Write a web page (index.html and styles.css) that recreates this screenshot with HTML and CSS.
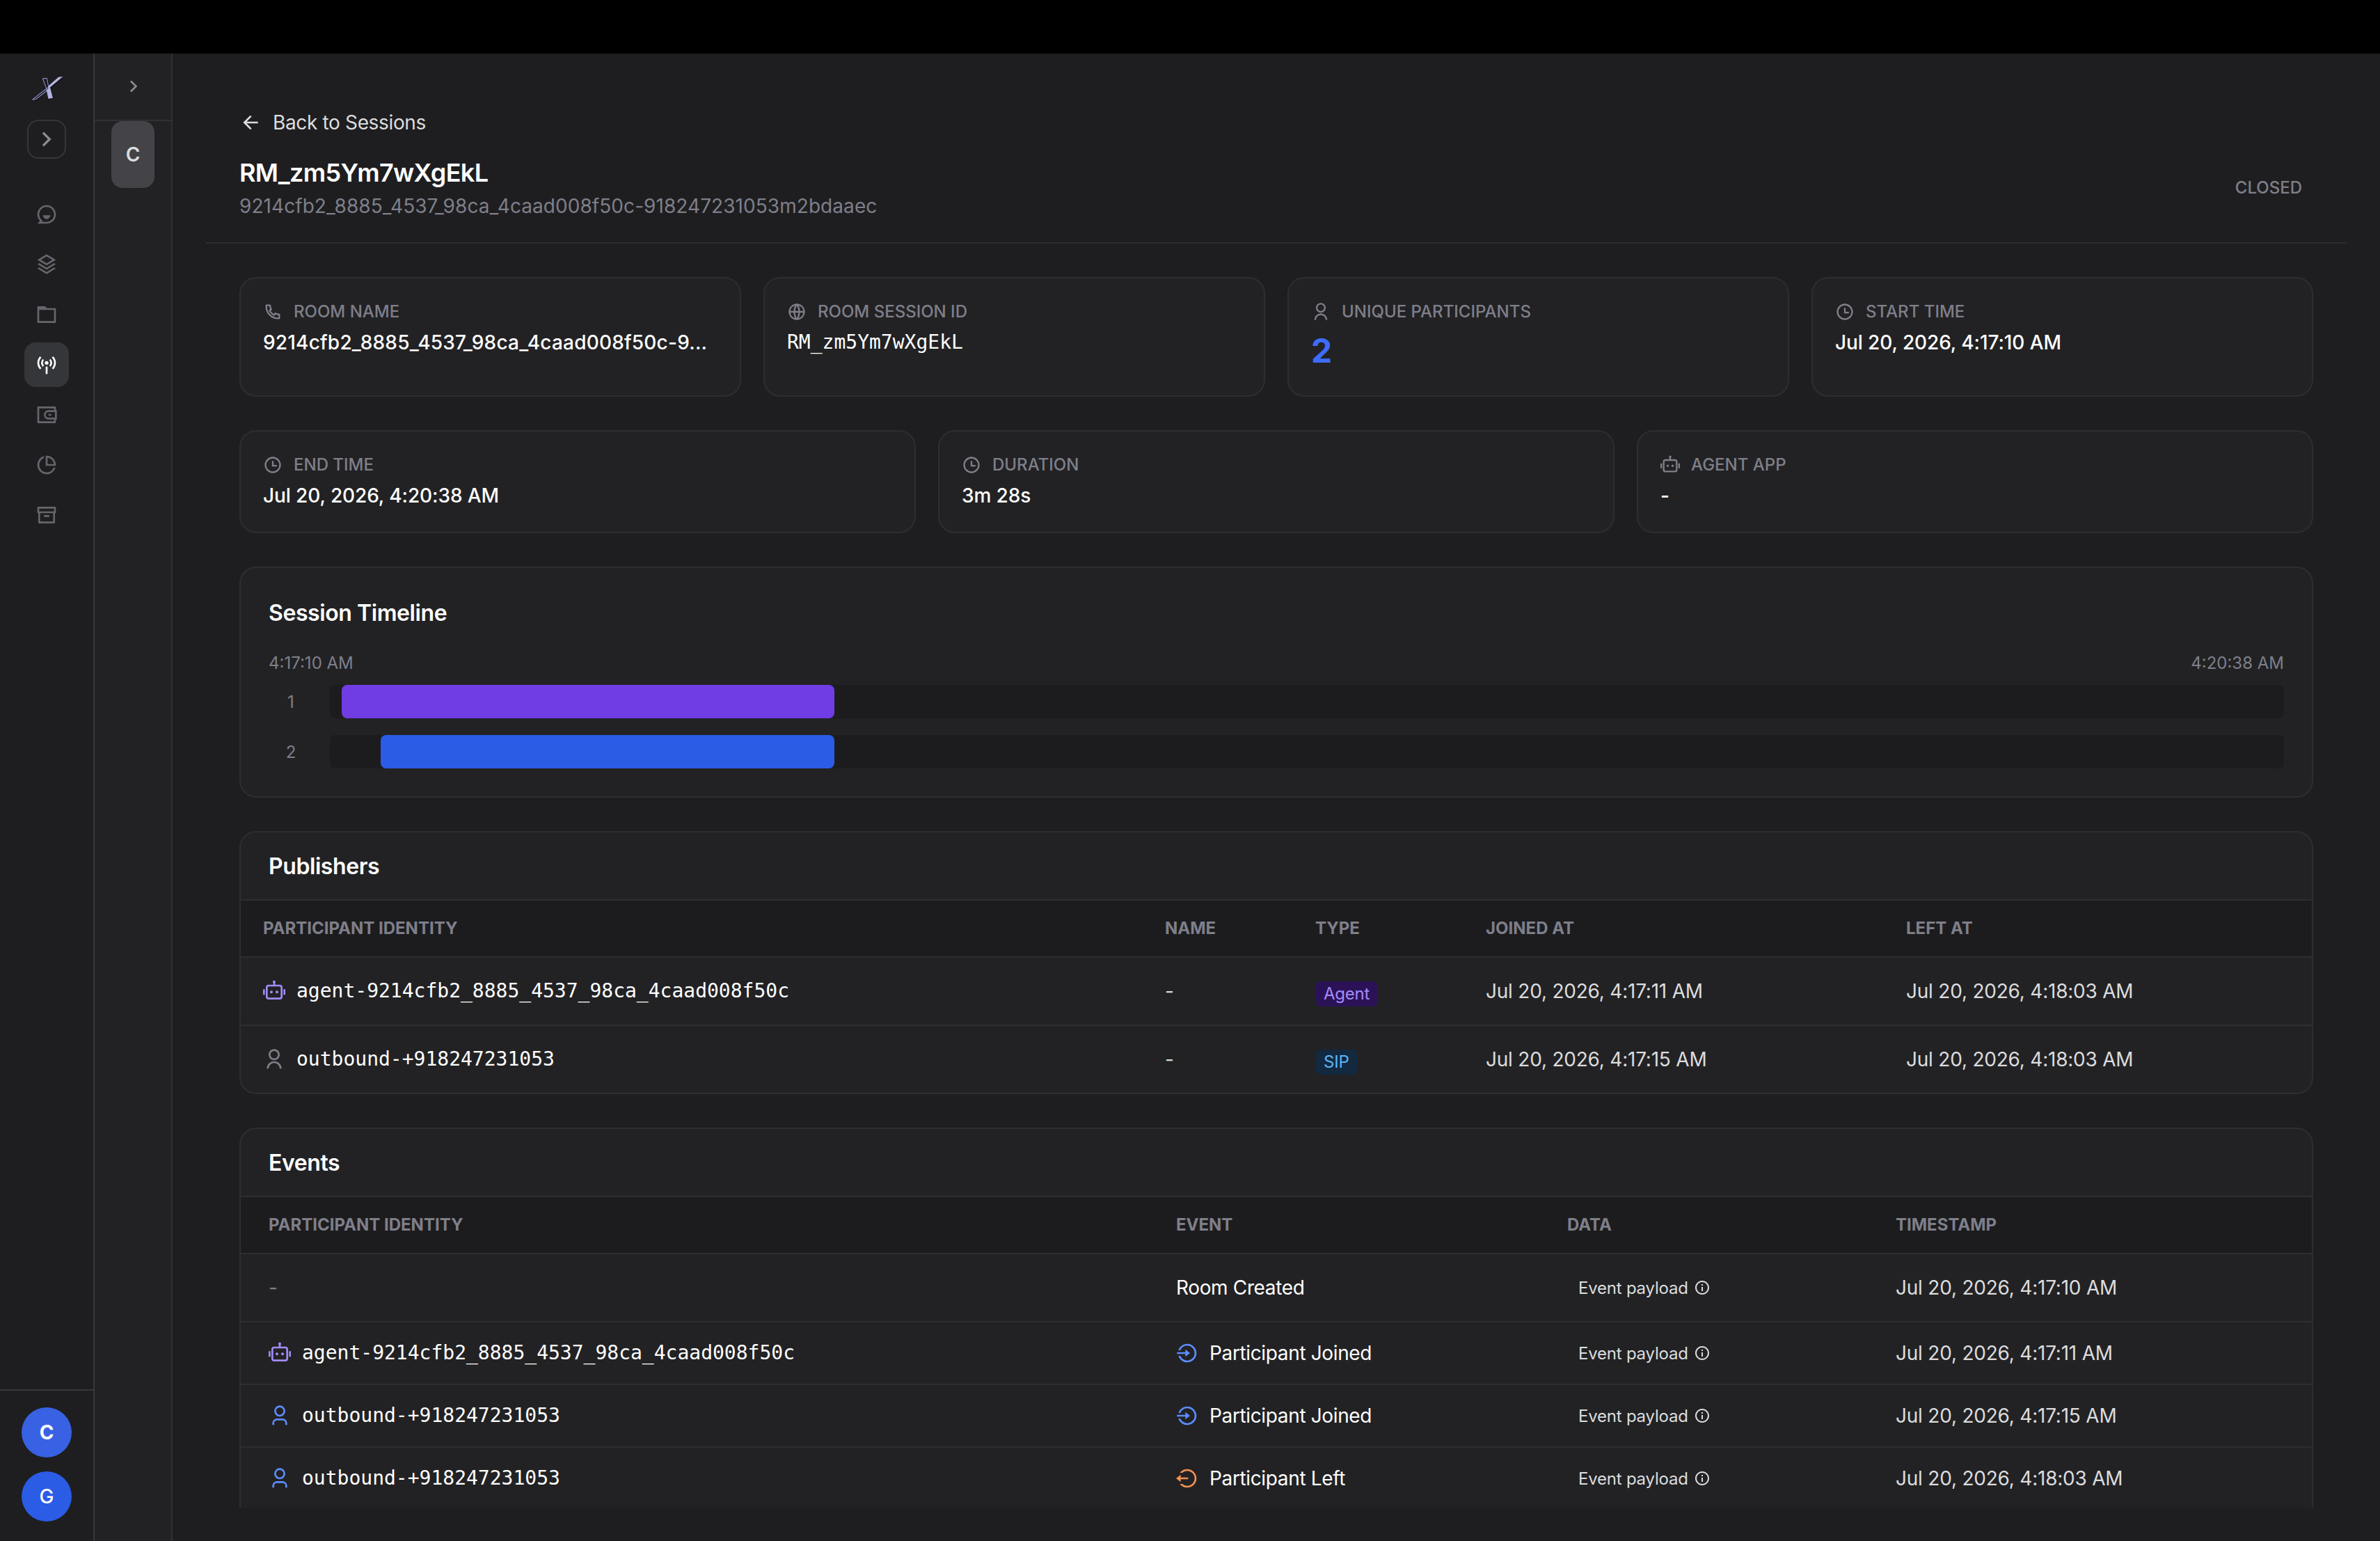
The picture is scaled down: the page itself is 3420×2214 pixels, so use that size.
FILE: index.html
```html
<!DOCTYPE html>
<html lang="en">
<head>
    <meta charset="UTF-8">
    <meta name="viewport" content="width=device-width, initial-scale=1.0">
    <title>Session Details</title>
    <link rel="stylesheet" href="styles.css">
</head>
<body>
    <svg class="sprite" aria-hidden="true">
        <symbol id="chevron" viewBox="0 0 24 24"><path d="M13.172 12l-4.95-4.95 1.414-1.414L16 12l-6.364 6.364-1.414-1.414z"/></symbol>
        <symbol id="chat" viewBox="0 0 24 24"><path d="M2 12C2 6.477 6.477 2 12 2s10 4.477 10 10-4.477 10-10 10H2l2.929-2.929A9.969 9.969 0 0 1 2 12zm4.828 8H12a8 8 0 1 0-8-8c0 2.152.851 4.165 2.343 5.657l1.414 1.414-.929.929zM8 13h8a4 4 0 1 1-8 0z"/></symbol>
        <symbol id="stack" viewBox="0 0 24 24"><path d="M20.083 15.2l1.202.721a.5.5 0 0 1 0 .858l-8.77 5.262a1 1 0 0 1-1.03 0l-8.77-5.262a.5.5 0 0 1 0-.858l1.202-.721L12 20.05l8.083-4.85zm0-4.7l1.202.721a.5.5 0 0 1 0 .858L12 17.65l-9.285-5.571a.5.5 0 0 1 0-.858l1.202-.721L12 15.35l8.083-4.85zm-7.569-9.191l8.771 5.262a.5.5 0 0 1 0 .858L12 13 2.715 7.429a.5.5 0 0 1 0-.858l8.77-5.262a1 1 0 0 1 1.03 0zM12 3.332L5.887 7 12 10.668 18.113 7 12 3.332z"/></symbol>
        <symbol id="folder" viewBox="0 0 24 24"><path d="M12.414 5H21a1 1 0 0 1 1 1v14a1 1 0 0 1-1 1H3a1 1 0 0 1-1-1V4a1 1 0 0 1 1-1h7.414l2 2zM4 7v12h16V7H4z"/></symbol>
        <symbol id="broadcast" viewBox="0 0 24 24"><circle cx="12" cy="10" r="2"/><path d="M11 14h2v8h-2z"/><path d="M5.64 3.64a9 9 0 0 0 0 12.72M18.36 3.64a9 9 0 0 1 0 12.72M8.46 6.46a5 5 0 0 0 0 7.08M15.54 6.46a5 5 0 0 1 0 7.08" fill="none" stroke="currentColor" stroke-width="2"/></symbol>
        <symbol id="wallet" viewBox="0 0 24 24"><path d="M22 7h1v10h-1v3a1 1 0 0 1-1 1H3a1 1 0 0 1-1-1V4a1 1 0 0 1 1-1h18a1 1 0 0 1 1 1v3zm-2 10h-6a5 5 0 0 1 0-10h6V5H4v14h16v-2zm1-2V9h-7a3 3 0 0 0 0 6h7zm-7-4h3v2h-3v-2z"/></symbol>
        <symbol id="pie" viewBox="0 0 24 24"><path d="M9 2.458v2.124A8.003 8.003 0 0 0 12 20a8.003 8.003 0 0 0 7.418-5h2.124c-1.274 4.057-5.064 7-9.542 7-5.523 0-10-4.477-10-10 0-4.478 2.943-8.268 7-9.542zM12 2c5.523 0 10 4.477 10 10 0 .338-.017.671-.05 1H11V2.05c.329-.033.663-.05 1-.05zm1 2.062V11h6.938A8.004 8.004 0 0 0 13 4.062z"/></symbol>
        <symbol id="archive" viewBox="0 0 24 24"><path d="M3 10H2V4.003C2 3.449 2.455 3 2.992 3h18.016A.99.99 0 0 1 22 4.003V10h-1v10.001a.996.996 0 0 1-.993.999H3.993A.996.996 0 0 1 3 20.001V10zm16 0H5v9h14v-9zM4 5v3h16V5H4zm5 7h6v2H9v-2z"/></symbol>
        <symbol id="arrow-left" viewBox="0 0 24 24"><path d="M7.828 11H20v2H7.828l5.364 5.364-1.414 1.414L4 12l7.778-7.778 1.414 1.414z"/></symbol>
        <symbol id="phone" viewBox="0 0 24 24"><path d="M9.366 10.682a10.556 10.556 0 0 0 3.952 3.952l.884-1.238a1 1 0 0 1 1.294-.296 11.422 11.422 0 0 0 4.583 1.364 1 1 0 0 1 .921.997v4.462a1 1 0 0 1-.898.995c-.53.055-1.064.082-1.602.082C9.94 21 3 14.06 3 5.5c0-.538.027-1.072.082-1.602A1 1 0 0 1 4.077 3h4.462a1 1 0 0 1 .997.921A11.422 11.422 0 0 0 10.9 8.504a1 1 0 0 1-.296 1.294l-1.238.884zm-2.522-.657l1.9-1.357A13.41 13.41 0 0 1 7.647 5H5.01c-.006.166-.009.333-.009.5C5 12.956 11.044 19 18.5 19c.167 0 .334-.003.5-.01v-2.637a13.41 13.41 0 0 1-3.668-1.097l-1.357 1.9a12.442 12.442 0 0 1-1.588-.75l-.058-.033a12.556 12.556 0 0 1-4.702-4.702l-.033-.058a12.442 12.442 0 0 1-.75-1.588z"/></symbol>
        <symbol id="globe" viewBox="0 0 24 24"><path d="M12 22C6.477 22 2 17.523 2 12S6.477 2 12 2s10 4.477 10 10-4.477 10-10 10zm-2.29-2.333A17.9 17.9 0 0 1 8.027 13H4.062a8.008 8.008 0 0 0 5.648 6.667zM10.03 13c.151 2.439.848 4.73 1.97 6.752A15.905 15.905 0 0 0 13.97 13h-3.94zm9.908 0h-3.965a17.9 17.9 0 0 1-1.683 6.667A8.008 8.008 0 0 0 19.938 13zM4.062 11h3.965A17.9 17.9 0 0 1 9.71 4.333 8.008 8.008 0 0 0 4.062 11zm5.969 0h3.938A15.905 15.905 0 0 0 12 4.248 15.905 15.905 0 0 0 10.03 11zm4.259-6.667A17.9 17.9 0 0 1 15.973 11h3.965a8.008 8.008 0 0 0-5.648-6.667z"/></symbol>
        <symbol id="user" viewBox="0 0 24 24"><path d="M4 22a8 8 0 1 1 16 0h-2a6 6 0 1 0-12 0H4zm8-9c-3.315 0-6-2.685-6-6s2.685-6 6-6 6 2.685 6 6-2.685 6-6 6zm0-2c2.21 0 4-1.79 4-4s-1.79-4-4-4-4 1.79-4 4 1.79 4 4 4z"/></symbol>
        <symbol id="user-flat" viewBox="0 0 24 24"><path d="M20 22h-2v-2a3 3 0 0 0-3-3H9a3 3 0 0 0-3 3v2H4v-2a5 5 0 0 1 5-5h6a5 5 0 0 1 5 5v2zm-8-9a6 6 0 1 1 0-12 6 6 0 0 1 0 12zm0-2a4 4 0 1 0 0-8 4 4 0 0 0 0 8z"/></symbol>
        <symbol id="clock" viewBox="0 0 24 24"><path d="M12 22C6.477 22 2 17.523 2 12S6.477 2 12 2s10 4.477 10 10-4.477 10-10 10zm0-2a8 8 0 1 0 0-16 8 8 0 0 0 0 16zm1-8h4v2h-6V7h2v5z"/></symbol>
        <symbol id="robot" viewBox="0 0 24 24"><path d="M13.5 2c0 .444-.193.843-.5 1.118V5h5a3 3 0 0 1 3 3v10a3 3 0 0 1-3 3H6a3 3 0 0 1-3-3V8a3 3 0 0 1 3-3h5V3.118A1.5 1.5 0 1 1 13.5 2zM6 7a1 1 0 0 0-1 1v10a1 1 0 0 0 1 1h12a1 1 0 0 0 1-1V8a1 1 0 0 0-1-1H6zm-4 3H0v6h2v-6zm20 0h2v6h-2v-6zM9 14.5a1.5 1.5 0 1 0 0-3 1.5 1.5 0 0 0 0 3zm6 0a1.5 1.5 0 1 0 0-3 1.5 1.5 0 0 0 0 3z"/></symbol>
        <symbol id="login" viewBox="0 0 24 24"><path d="M10 11V8l5 4-5 4v-3H1v-2h9zm-7.542 4h2.124A8.003 8.003 0 0 0 20 12 8 8 0 0 0 4.582 9H2.458C3.732 4.943 7.522 2 12 2c5.523 0 10 4.477 10 10s-4.477 10-10 10c-4.478 0-8.268-2.943-9.542-7z"/></symbol>
        <symbol id="logout" viewBox="0 0 24 24"><path d="M5 11h8v2H5v3l-5-4 5-4v3zm-1 7h2.708a8 8 0 1 0 0-12H4A9.985 9.985 0 0 1 12 2c5.523 0 10 4.477 10 10s-4.477 10-10 10a9.985 9.985 0 0 1-8-4z"/></symbol>
        <symbol id="info" viewBox="0 0 24 24"><path d="M12 22C6.477 22 2 17.523 2 12S6.477 2 12 2s10 4.477 10 10-4.477 10-10 10zm0-2a8 8 0 1 0 0-16 8 8 0 0 0 0 16zM11 7h2v2h-2V7zm0 4h2v6h-2v-6z"/></symbol>
    </svg>

    <div class="topbar"></div>
    <div class="app">
        <nav class="sidebar">
            <svg class="logo" viewBox="0 0 46 34">
                <path class="logo-shadow" d="M17 4l7-1 3 12L40 2l6-1-18 16 4 14-7 2-3-12L9 34l-8 0 19-15z"/>
                <path class="logo-dark" d="M16.7 3l5.500-.6 2.800 12.600-3.200 2.500z"/>
                <path class="logo-dark" d="M1.500 33.200l5.500-.9L22.500 20l-1-2.500z"/>
                <path class="logo-light" d="M23.500 18.500L25 13 39 .8l6.500-.8z"/>
                <path class="logo-light" d="M21.700 19.500l5.300-4 4 15.200-6.500 1.300z"/>
            </svg>
            <button class="expand"><svg class="icon-40"><use href="#chevron"/></svg></button>
            <div class="menu">
                <a class="menu-item"><svg class="icon-32"><use href="#chat"/></svg></a>
                <a class="menu-item"><svg class="icon-32"><use href="#stack"/></svg></a>
                <a class="menu-item"><svg class="icon-32"><use href="#folder"/></svg></a>
                <a class="menu-item active"><svg class="icon-32"><use href="#broadcast"/></svg></a>
                <a class="menu-item"><svg class="icon-32"><use href="#wallet"/></svg></a>
                <a class="menu-item"><svg class="icon-32"><use href="#pie"/></svg></a>
                <a class="menu-item"><svg class="icon-32"><use href="#archive"/></svg></a>
            </div>
            <div class="accounts">
                <div class="avatar avatar-org">C</div>
                <div class="avatar">G</div>
            </div>
        </nav>

        <aside class="panel">
            <div class="panel-head"><svg class="icon-32"><use href="#chevron"/></svg></div>
            <div class="workspace">C</div>
        </aside>

        <main class="main">
            <header class="header">
                <div>
                    <a class="back"><svg class="icon-32"><use href="#arrow-left"/></svg>Back to Sessions</a>
                    <h1>RM_zm5Ym7wXgEkL</h1>
                    <p class="subtitle">9214cfb2_8885_4537_98ca_4caad008f50c-918247231053m2bdaaec</p>
                </div>
                <span class="status">CLOSED</span>
            </header>

            <div class="content">
                <div class="cards cards-4">
                    <div class="card">
                        <div class="label"><svg class="icon-28"><use href="#phone"/></svg>ROOM NAME</div>
                        <div class="value room">9214cfb2_8885_4537_98ca_4caad008f50c-9...</div>
                    </div>
                    <div class="card">
                        <div class="label"><svg class="icon-28"><use href="#globe"/></svg>ROOM SESSION ID</div>
                        <div class="value mono">RM_zm5Ym7wXgEkL</div>
                    </div>
                    <div class="card">
                        <div class="label"><svg class="icon-28"><use href="#user"/></svg>UNIQUE PARTICIPANTS</div>
                        <div class="value big">2</div>
                    </div>
                    <div class="card">
                        <div class="label"><svg class="icon-28"><use href="#clock"/></svg>START TIME</div>
                        <div class="value">Jul 20, 2026, 4:17:10 AM</div>
                    </div>
                </div>

                <div class="cards cards-3">
                    <div class="card">
                        <div class="label"><svg class="icon-28"><use href="#clock"/></svg>END TIME</div>
                        <div class="value">Jul 20, 2026, 4:20:38 AM</div>
                    </div>
                    <div class="card">
                        <div class="label"><svg class="icon-28"><use href="#clock"/></svg>DURATION</div>
                        <div class="value">3m 28s</div>
                    </div>
                    <div class="card">
                        <div class="label"><svg class="icon-28"><use href="#robot"/></svg>AGENT APP</div>
                        <div class="value">-</div>
                    </div>
                </div>

                <section class="box timeline">
                    <h2>Session Timeline</h2>
                    <div class="times"><span>4:17:10 AM</span><span>4:20:38 AM</span></div>
                    <div class="track-row">
                        <span class="track-label">1</span>
                        <div class="track"><div class="bar purple" style="margin-left: 0.6%; width: 25.23%"></div></div>
                    </div>
                    <div class="track-row">
                        <span class="track-label">2</span>
                        <div class="track"><div class="bar blue" style="margin-left: 2.6%; width: 23.23%"></div></div>
                    </div>
                </section>

                <section class="box publishers">
                    <h2 class="box-title">Publishers</h2>
                    <div class="row row-head">
                        <span>PARTICIPANT IDENTITY</span><span>NAME</span><span>TYPE</span><span>JOINED AT</span><span>LEFT AT</span>
                    </div>
                    <div class="row">
                        <span class="identity"><svg class="icon-32 c-purple"><use href="#robot"/></svg>agent-9214cfb2_8885_4537_98ca_4caad008f50c</span>
                        <span>-</span>
                        <span><b class="tag tag-agent">Agent</b></span>
                        <span>Jul 20, 2026, 4:17:11 AM</span>
                        <span>Jul 20, 2026, 4:18:03 AM</span>
                    </div>
                    <div class="row">
                        <span class="identity"><svg class="icon-32 c-gray"><use href="#user"/></svg>outbound-+918247231053</span>
                        <span>-</span>
                        <span><b class="tag tag-sip">SIP</b></span>
                        <span>Jul 20, 2026, 4:17:15 AM</span>
                        <span>Jul 20, 2026, 4:18:03 AM</span>
                    </div>
                </section>

                <section class="box events">
                    <h2 class="box-title">Events</h2>
                    <div class="row row-head">
                        <span>PARTICIPANT IDENTITY</span><span>EVENT</span><span>DATA</span><span>TIMESTAMP</span>
                    </div>
                    <div class="row row-tall">
                        <span class="c-gray">-</span>
                        <span class="event">Room Created</span>
                        <span class="payload">Event payload<svg class="icon-24"><use href="#info"/></svg></span>
                        <span>Jul 20, 2026, 4:17:10 AM</span>
                    </div>
                    <div class="row">
                        <span class="identity"><svg class="icon-32 c-purple"><use href="#robot"/></svg>agent-9214cfb2_8885_4537_98ca_4caad008f50c</span>
                        <span class="event"><svg class="icon-32 c-blue"><use href="#login"/></svg>Participant Joined</span>
                        <span class="payload">Event payload<svg class="icon-24"><use href="#info"/></svg></span>
                        <span>Jul 20, 2026, 4:17:11 AM</span>
                    </div>
                    <div class="row">
                        <span class="identity"><svg class="icon-32 c-blue"><use href="#user-flat"/></svg>outbound-+918247231053</span>
                        <span class="event"><svg class="icon-32 c-blue"><use href="#login"/></svg>Participant Joined</span>
                        <span class="payload">Event payload<svg class="icon-24"><use href="#info"/></svg></span>
                        <span>Jul 20, 2026, 4:17:15 AM</span>
                    </div>
                    <div class="row">
                        <span class="identity"><svg class="icon-32 c-blue"><use href="#user-flat"/></svg>outbound-+918247231053</span>
                        <span class="event"><svg class="icon-32 c-orange"><use href="#logout"/></svg>Participant Left</span>
                        <span class="payload">Event payload<svg class="icon-24"><use href="#info"/></svg></span>
                        <span>Jul 20, 2026, 4:18:03 AM</span>
                    </div>
                </section>
            </div>
        </main>
    </div>
</body>
</html>
```
FILE: styles.css
```css
* {
    box-sizing: border-box;
    margin: 0;
    padding: 0;
}
body {
    display: flex;
    flex-direction: column;
    height: 100vh;
    overflow: hidden;
    background: #1e1e20;
    color: #dcdcde;
    font-family: Inter, sans-serif;
    font-size: 28px;
    line-height: 40px;
}
svg {
    display: block;
    flex-shrink: 0;
    fill: currentColor;
}
.sprite {
    display: none;
}
.icon-24 { width: 24px; height: 24px; }
.icon-28 { width: 28px; height: 28px; }
.icon-32 { width: 32px; height: 32px; }
.icon-40 { width: 40px; height: 40px; }
.c-purple { color: #a28bfa; }
.c-blue { color: #5c8cff; }
.c-orange { color: #f0914f; }
.c-gray { color: #7f7f8a; }

.topbar {
    height: 77px;
    flex-shrink: 0;
    background: #000;
}
.app {
    display: flex;
    flex: 1;
    min-height: 0;
}

/* left sidebar */
.sidebar {
    display: flex;
    flex-direction: column;
    align-items: center;
    width: 136px;
    padding-top: 32px;
    border-right: 2px solid #38383b;
}
.logo {
    width: 46px;
    height: 34px;
    margin: 1px 0 28px 2px;
}
.logo-shadow { fill: #0c0c14; }
.logo-dark { fill: #14141c; stroke: #8686b4; stroke-width: 1.3; }
.logo-light { fill: #b3b3dc; }
.expand {
    display: flex;
    align-items: center;
    justify-content: center;
    width: 56px;
    height: 56px;
    border: 2px solid #36363a;
    border-radius: 16px;
    background: none;
    color: #8b8b95;
}
.menu {
    display: flex;
    flex-direction: column;
    gap: 8px;
    margin-top: 48px;
}
.menu-item {
    display: flex;
    align-items: center;
    justify-content: center;
    width: 64px;
    height: 64px;
    border-radius: 16px;
    color: #65656d;
}
.menu-item.active {
    background: #35363a;
    color: #fff;
}
.accounts {
    display: flex;
    flex-direction: column;
    align-items: center;
    gap: 20px;
    width: 100%;
    margin-top: auto;
    padding: 24px 0 28px;
    border-top: 2px solid #38383b;
}
.avatar {
    width: 72px;
    height: 72px;
    border-radius: 50%;
    background: #2b5ce6;
    color: #fff;
    font-weight: 500;
    line-height: 73px;
    text-align: center;
}
.avatar-org {
    background: #3862e3;
    font-weight: 700;
}

/* workspace panel */
.panel {
    display: flex;
    flex-direction: column;
    align-items: center;
    width: 112px;
    background: #222224;
    border-right: 2px solid #303033;
}
.panel-head {
    display: flex;
    justify-content: center;
    width: 100%;
    height: 97px;
    padding: 31px 0 0 2px;
    border-bottom: 2px solid #303033;
    color: #8b8b95;
}
.workspace {
    width: 62px;
    height: 96px;
    border-radius: 16px;
    background: #434348;
    color: #dcdcde;
    font-weight: 600;
    line-height: 96px;
    text-align: center;
}

/* main */
.main {
    display: flex;
    flex-direction: column;
    flex: 1;
    padding: 79px 48px 48px;
    min-width: 0;
}
.header {
    display: flex;
    align-items: center;
    justify-content: space-between;
    height: 194px;
    padding: 0 48px 32px;
    border-bottom: 2px solid #2e2e31;
}
.back {
    display: flex;
    align-items: center;
    gap: 16px;
    margin-bottom: 24px;
    letter-spacing: -0.35px;
}
h1 {
    color: #fff;
    font-size: 36px;
    font-weight: 600;
    letter-spacing: -0.65px;
    line-height: 56px;
}
.subtitle {
    color: #7f7f8a;
    letter-spacing: 0.06px;
}
.status {
    padding: 68px 16px 0;
    color: #7f7f8a;
    font-size: 24px;
    font-weight: 500;
}
.content {
    display: flex;
    flex-direction: column;
    flex: 1;
    gap: 48px;
    min-height: 0;
    padding: 48px 48px 0;
    overflow: hidden;
}
.content > * {
    flex-shrink: 0;
}
.cards {
    display: grid;
    gap: 32px;
}
.cards-4 { grid-template-columns: repeat(4, minmax(0, 1fr)); }
.cards-3 { grid-template-columns: repeat(3, minmax(0, 1fr)); }
.card,
.box {
    background: #222224;
    border: 2px solid #2e2e31;
    border-radius: 24px;
}
.card {
    padding: 32px;
}
.label {
    display: flex;
    align-items: center;
    gap: 16px;
    height: 32px;
    margin-bottom: 8px;
    color: #7f7f8a;
    font-size: 24px;
    font-weight: 500;
    line-height: 34px;
}
.value {
    color: #fff;
    font-weight: 500;
    letter-spacing: -0.1px;
    white-space: nowrap;
}
.value.room {
    letter-spacing: 0.2px;
}
.value.big {
    color: #3e6cfa;
    font-size: 48px;
    font-weight: 700;
    line-height: 64px;
}
.value.mono,
.identity {
    font-family: "DejaVu Sans Mono", monospace;
    font-weight: 400;
    letter-spacing: 0;
    color: #fff;
}
h2 {
    height: 48px;
    color: #fff;
    font-size: 32px;
    font-weight: 600;
    letter-spacing: -0.42px;
    line-height: 50px;
}

/* timeline */
.timeline {
    padding: 40px;
}
.times {
    display: flex;
    justify-content: space-between;
    height: 32px;
    margin: 32px 0 16px;
    color: #7f7f8a;
    font-size: 24px;
    line-height: 34px;
}
.track-row {
    display: flex;
    gap: 24px;
}
.track-row + .track-row {
    margin-top: 24px;
}
.track-label {
    width: 64px;
    height: 48px;
    color: #7f7f8a;
    font-size: 24px;
    line-height: 50px;
    text-align: center;
}
.track {
    flex: 1;
    height: 48px;
    border-radius: 8px;
    background: #1c1c1e;
}
.bar {
    height: 48px;
    border-radius: 8px;
}
.purple { background: #703de5; }
.blue { background: #2b5ce6; }

/* tables */
.box {
    overflow: hidden;
}
.box-title {
    height: 96px;
    padding: 24px 40px;
}
.row {
    display: grid;
    align-items: center;
    height: 98px;
    border-top: 2px solid #2e2e31;
    letter-spacing: -0.22px;
}
.row-head {
    height: 82px;
    background: #1c1c1e;
    color: #7f7f8a;
    font-size: 24px;
    font-weight: 700;
    letter-spacing: 0;
    line-height: 42px;
}
.publishers .row {
    grid-template-columns: 1296px 216px 245px 604px 1fr;
}
.publishers .row > * {
    padding: 0 32px;
}
.events {
    border-radius: 24px 24px 0 0;
}
.events .row {
    grid-template-columns: 1304px 562px 472px 1fr;
    height: 90px;
}
.events .row-head {
    height: 82px;
}
.events .row-tall {
    height: 98px;
}
.events .row > * {
    padding: 0 40px;
}
.identity,
.event,
.payload {
    display: flex;
    align-items: center;
    gap: 16px;
}
.event {
    color: #fff;
    letter-spacing: -0.36px;
}
.events .payload {
    gap: 8px;
    padding-left: 56px;
    font-size: 24px;
    line-height: 41px;
}
.tag {
    display: inline-block;
    margin-top: 7px;
    padding: 0 12px;
    border-radius: 8px;
    font-size: 24px;
    font-weight: 400;
    line-height: 36px;
    vertical-align: top;
}
.tag-agent {
    background: #2b1257;
    color: #a28bfa;
}
.tag-sip {
    background: #12293f;
    color: #5cb6f5;
}
```
